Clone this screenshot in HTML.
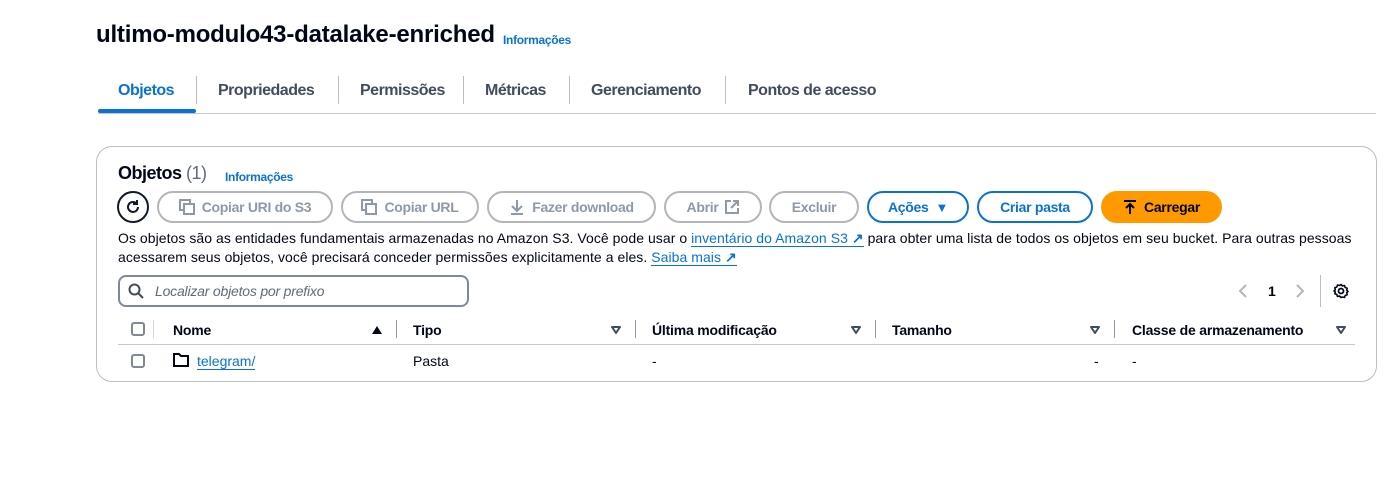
<!DOCTYPE html>
<html><head><meta charset="utf-8"><style>
*{box-sizing:border-box;margin:0;padding:0}
body{width:1397px;height:490px;background:#fff;font-family:"Liberation Sans",sans-serif;color:#000716;position:relative;overflow:hidden}
.a{position:absolute;white-space:nowrap}
.link{color:#0972d3}
.tab{position:absolute;top:82px;font-size:16px;font-weight:bold;color:#414d5c;letter-spacing:-0.5px}
.sep{position:absolute;width:1px;background:#b6bec9}
.btn{position:absolute;top:191px;height:32px;border:2px solid #b4b4bb;border-radius:16px;font-size:14px;font-weight:bold;color:#8d99a8;display:flex;align-items:center;justify-content:center;gap:7px;letter-spacing:-0.3px}
.bl{border-color:#0972d3;color:#0972d3}
.th{position:absolute;top:322px;font-size:14px;font-weight:bold;letter-spacing:-0.2px}
.cb{position:absolute;width:14px;height:14px;border:2px solid #7d8998;border-radius:3px}
.tri{position:absolute;top:324px}
.txt{font-size:14px;letter-spacing:0px}
</style></head><body>
<div class="a" style="left:96px;top:21px;font-size:24px;font-weight:bold;letter-spacing:-0.2px">ultimo-modulo43-datalake-enriched</div>
<div class="a link" style="left:503px;top:33px;font-size:12px;font-weight:bold;letter-spacing:-0.3px">Informações</div>

<div class="tab" style="left:118px;color:#0972d3">Objetos</div>
<div style="position:absolute;left:98px;top:109px;width:98px;height:4px;background:#0972d3;border-radius:2px"></div>
<div class="sep" style="left:196px;top:76px;height:28px"></div>
<div class="tab" style="left:218px">Propriedades</div>
<div class="sep" style="left:338px;top:76px;height:28px"></div>
<div class="tab" style="left:360px">Permissões</div>
<div class="sep" style="left:463px;top:76px;height:28px"></div>
<div class="tab" style="left:485px">Métricas</div>
<div class="sep" style="left:569px;top:76px;height:28px"></div>
<div class="tab" style="left:591px">Gerenciamento</div>
<div class="sep" style="left:725px;top:76px;height:28px"></div>
<div class="tab" style="left:748px">Pontos de acesso</div>
<div style="position:absolute;left:98px;top:113px;width:1278px;height:1px;background:#c6c6cd"></div>

<div style="position:absolute;left:96px;top:146px;width:1281px;height:236px;border:1px solid #b6bec9;border-radius:16px"></div>
<div class="a" style="left:118px;top:163px;font-size:18px;font-weight:bold;letter-spacing:-0.5px">Objetos <span style="font-weight:normal;color:#5f6b7a">(1)</span></div>
<div class="a link" style="left:225px;top:170px;font-size:12px;font-weight:bold;letter-spacing:-0.3px">Informações</div>

<div style="position:absolute;left:117px;top:191px;width:32px;height:32px;border:2px solid #0f1b2a;border-radius:50%"></div>
<svg class="a" style="left:123px;top:197px" width="20" height="20" viewBox="0 0 20 20"><path d="M15 10a5 5 0 1 1-2-4" fill="none" stroke="#0f1b2a" stroke-width="2"/><path d="M14 3v4h-4" fill="none" stroke="#0f1b2a" stroke-width="2"/></svg>

<div class="btn" style="left:157px;width:176px"><svg width="16" height="16"><rect x="1" y="1" width="10" height="10" fill="none" stroke="#8d99a8" stroke-width="2"/><rect x="5" y="5" width="10" height="10" fill="#fff" stroke="#8d99a8" stroke-width="2"/></svg>Copiar URI do S3</div>
<div class="btn" style="left:341px;width:138px"><svg width="16" height="16"><rect x="1" y="1" width="10" height="10" fill="none" stroke="#8d99a8" stroke-width="2"/><rect x="5" y="5" width="10" height="10" fill="#fff" stroke="#8d99a8" stroke-width="2"/></svg>Copiar URL</div>
<div class="btn" style="left:487px;width:169px"><svg width="16" height="16"><path d="M8 1v10M3 7l5 5 5-5M2 15h12" fill="none" stroke="#8d99a8" stroke-width="2"/></svg>Fazer download</div>
<div class="btn" style="left:664px;width:98px">Abrir <svg width="14" height="14"><path d="M6 1H1v12h12V8M8 1h5v5M13 1 6 8" fill="none" stroke="#8d99a8" stroke-width="2"/></svg></div>
<div class="btn" style="left:769px;width:90px">Excluir</div>
<div class="btn bl" style="left:867px;width:102px">Ações <span style="font-size:13px">▼</span></div>
<div class="btn bl" style="left:977px;width:116px">Criar pasta</div>
<div class="btn" style="left:1101px;width:121px;background:#ff9900;border-color:#ff9900;color:#000716"><svg width="14" height="16"><path d="M1 2h12M7 15V5M3 9l4-4 4 4" fill="none" stroke="#000716" stroke-width="2"/></svg>Carregar</div>

<div class="a txt" style="left:118px;top:230px;letter-spacing:0.05px">Os objetos são as entidades fundamentais armazenadas no Amazon S3. Você pode usar o <span class="link" style="border-bottom:1px solid #0972d3">inventário do Amazon S3 <b>↗</b></span> para obter uma lista de todos os objetos em seu bucket. Para outras pessoas</div>
<div class="a txt" style="left:118px;top:249px;letter-spacing:0.05px">acessarem seus objetos, você precisará conceder permissões explicitamente a eles. <span class="link" style="border-bottom:1px solid #0972d3">Saiba mais <b>↗</b></span></div>

<div style="position:absolute;left:118px;top:275px;width:351px;height:32px;border:2px solid #7d8998;border-radius:8px"></div>
<svg class="a" style="left:128px;top:283px" width="16" height="16"><circle cx="6.5" cy="6.5" r="5" fill="none" stroke="#414d5c" stroke-width="2"/><path d="M10 10l5 5" stroke="#414d5c" stroke-width="2"/></svg>
<div class="a" style="left:155px;top:283px;font-size:14px;font-style:italic;color:#5f6b7a;letter-spacing:-0.2px">Localizar objetos por prefixo</div>

<svg class="a" style="left:1238px;top:284px" width="10" height="14"><path d="M8 1 2 7l6 6" fill="none" stroke="#b4b4bb" stroke-width="2"/></svg>
<div class="a" style="left:1268px;top:283px;font-size:14px;font-weight:bold">1</div>
<svg class="a" style="left:1295px;top:284px" width="10" height="14"><path d="M2 1l6 6-6 6" fill="none" stroke="#b4b4bb" stroke-width="2"/></svg>
<div class="sep" style="left:1320px;top:275px;height:32px"></div>
<svg class="a" style="left:1333px;top:283px" width="16" height="16" viewBox="0 0 16 16"><circle cx="8" cy="8" r="2.5" fill="none" stroke="#000716" stroke-width="1.8"/><path d="M8 1.5l1.5 1.5 2-.5.7 2 2 .7-.5 2 1.3 1.3-1.3 1.3.5 2-2 .7-.7 2-2-.5L8 14.5 6.5 13l-2 .5-.7-2-2-.7.5-2L1 8l1.3-1.3-.5-2 2-.7.7-2 2 .5z" fill="none" stroke="#000716" stroke-width="1.6" stroke-linejoin="round"/></svg>

<div class="cb" style="left:131px;top:322px"></div>
<div class="sep" style="left:153px;top:320px;height:18px;background:#d1d5db"></div>
<div class="th" style="left:173px">Nome</div>
<svg class="tri" style="left:371px" width="12" height="12"><path d="M1 10h10L6 2z" fill="#000716"/></svg>
<div class="sep" style="left:396px;top:320px;height:18px;background:#8d99a8"></div>
<div class="th" style="left:413px">Tipo</div>
<svg class="tri" style="left:610px" width="12" height="12"><path d="M2 3h8L6 9z" fill="none" stroke="#414d5c" stroke-width="2" stroke-linejoin="round"/></svg>
<div class="sep" style="left:635px;top:320px;height:18px;background:#8d99a8"></div>
<div class="th" style="left:652px">Última modificação</div>
<svg class="tri" style="left:850px" width="12" height="12"><path d="M2 3h8L6 9z" fill="none" stroke="#414d5c" stroke-width="2" stroke-linejoin="round"/></svg>
<div class="sep" style="left:875px;top:320px;height:18px;background:#8d99a8"></div>
<div class="th" style="left:892px">Tamanho</div>
<svg class="tri" style="left:1089px" width="12" height="12"><path d="M2 3h8L6 9z" fill="none" stroke="#414d5c" stroke-width="2" stroke-linejoin="round"/></svg>
<div class="sep" style="left:1114px;top:320px;height:18px;background:#8d99a8"></div>
<div class="th" style="left:1132px">Classe de armazenamento</div>
<svg class="tri" style="left:1335px" width="12" height="12"><path d="M2 3h8L6 9z" fill="none" stroke="#414d5c" stroke-width="2" stroke-linejoin="round"/></svg>
<div style="position:absolute;left:118px;top:344px;width:1237px;height:1px;background:#c6c6cd"></div>

<div class="cb" style="left:131px;top:354px"></div>
<svg class="a" style="left:173px;top:353px" width="16" height="14"><path d="M1 1h5l2 2h7v10H1z" fill="none" stroke="#000716" stroke-width="2"/></svg>
<div class="a link txt" style="left:197px;top:353px;border-bottom:1px solid #0972d3">telegram/</div>
<div class="a txt" style="left:413px;top:353px">Pasta</div>
<div class="a txt" style="left:652px;top:353px">-</div>
<div class="a txt" style="left:1094px;top:353px">-</div>
<div class="a txt" style="left:1132px;top:353px">-</div>
</body></html>
